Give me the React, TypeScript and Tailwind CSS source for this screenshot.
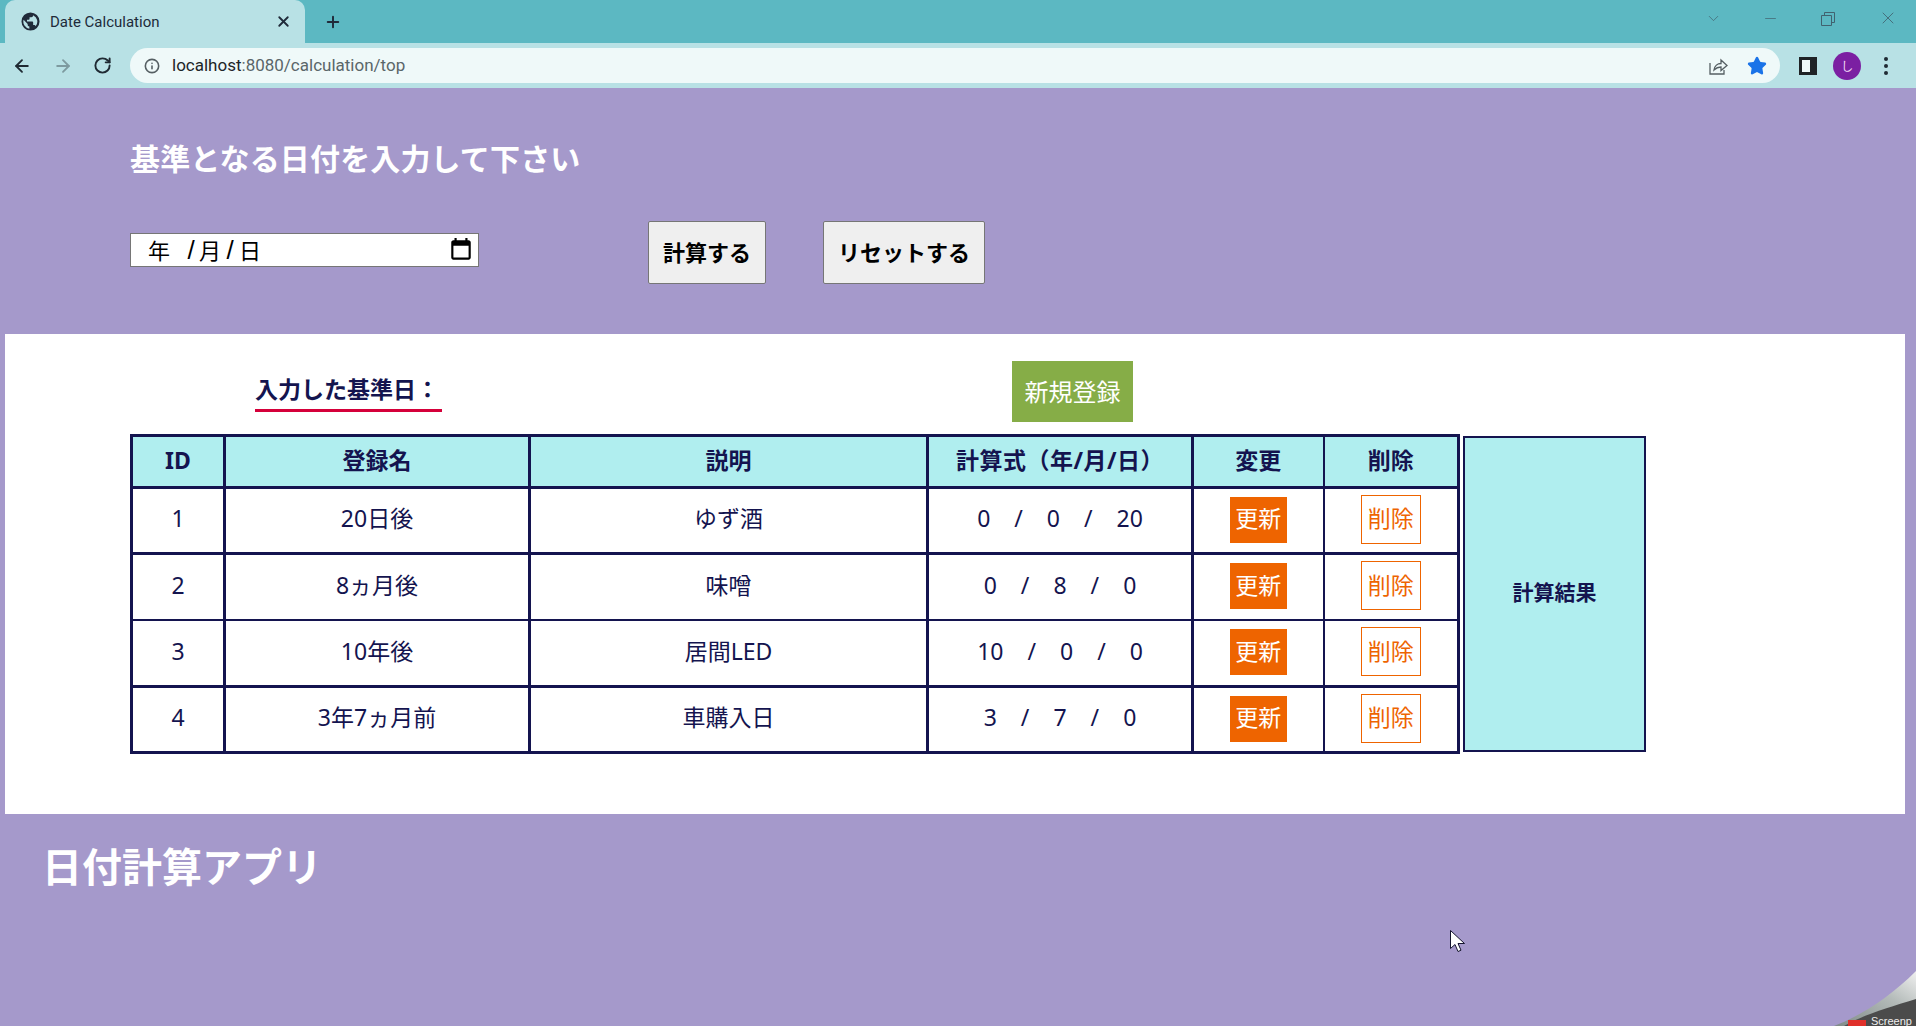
import { ArrowLeft, ArrowRight, ChevronDown, Info, Minus, Plus, RotateCw, Star, X } from 'lucide-react'

const cjk = "font-['Noto_Sans','Noto_Sans_CJK_JP',sans-serif]"

const rows = [
  { id: 1, name: '20日後', desc: 'ゆず酒', calc: ['0', '0', '20'], rowClass: 'h-[66px] border-b-[3px] border-[#14144f]' },
  { id: 2, name: '8ヵ月後', desc: '味噌', calc: ['0', '8', '0'], rowClass: 'h-[66px] border-b-2 border-[#14144f]' },
  { id: 3, name: '10年後', desc: '居間LED', calc: ['10', '0', '0'], rowClass: 'h-[67px] border-b-[3px] border-[#14144f]' },
  { id: 4, name: '3年7ヵ月前', desc: '車購入日', calc: ['3', '7', '0'], rowClass: 'h-[66px] border-b-2 border-[#14144f]' },
]

function BrowserChrome() {
  return (
    <div className="shrink-0">
      {/* Tab strip */}
      <div className="flex h-[43px] bg-[#5cb8c2] pl-[5px] text-[#202b3a]">
        <div className="flex w-[300px] items-center rounded-t-[10px] bg-[#b8e1e5] pl-[16px] pr-[13px]">
          <svg viewBox="0 0 20 20" className="h-[19px] w-[19px] shrink-0" fill="#202b3a">
            <path d="M10 .5a9.500 9.500 0 1 0 0 19 9.500 9.500 0 0 0 0-19ZM2.700 8.200l4.300 4.300v1c0 1 .8 1.800 1.800 1.800v2.300A7.600 7.600 0 0 1 2.700 8.200Zm12.700 6.900c-.2-.7-.9-1.300-1.700-1.300h-.9V11c0-.5-.4-.9-.9-.9H6.300V8.200h1.800c.5 0 .9-.4.900-.9V5.500h1.900c1 0 1.800-.8 1.800-1.800v-.4a7.600 7.600 0 0 1 2.700 11.800Z" />
          </svg>
          <span className="ml-[10px] pt-[1px] font-['Roboto',sans-serif] text-[15px]">Date Calculation</span>
          <X className="ml-auto h-[17px] w-[17px]" strokeWidth={2.6} />
        </div>
        <Plus className="ml-[19px] mt-[13px] h-[18px] w-[18px]" strokeWidth={2.6} />
        <div className="ml-auto flex items-start text-[#41626f]">
          <ChevronDown className="mr-[40px] mt-[10px] h-[17px] w-[17px]" strokeWidth={1} />
          <Minus className="mr-[42px] mt-[10px] h-[17px] w-[17px]" strokeWidth={1} />
          <svg viewBox="0 0 14 14" className="mr-[43px] mt-[12px] h-[14px] w-[14px]" fill="none" stroke="currentColor">
            <path d="M.5 3.500h10v10H.5zM3.500 3.500v-3h10v10h-3" />
          </svg>
          <X className="mr-[18px] mt-[8px] h-[20px] w-[20px]" strokeWidth={1} />
        </div>
      </div>
      {/* Toolbar */}
      <div className="flex h-[45px] items-center bg-[#b8e1e5] text-[#1f2a33]">
        <ArrowLeft className="ml-[12px] h-[20px] w-[20px]" strokeWidth={2.2} />
        <ArrowRight className="ml-[21px] h-[20px] w-[20px] text-[#7d9a9f]" strokeWidth={2.2} />
        <RotateCw className="ml-[20px] h-[19px] w-[19px]" strokeWidth={2.4} />
        <div className="ml-[18px] flex h-[35px] w-[1650px] items-center rounded-full bg-[#eff9f9] pl-[14px] pr-[11px]">
          <Info className="h-[16px] w-[16px] text-[#555f63]" strokeWidth={2.4} />
          <span className="ml-[12px] pt-[1px] font-['Roboto',sans-serif] text-[17px] text-[#5a6669]">
            <span className="text-[#1d2528]">localhost</span>:8080/calculation/top
          </span>
          <svg viewBox="0 0 20 20" className="ml-auto h-[20px] w-[20px]" fill="none" stroke="#555f63" strokeWidth="1.300">
            <path d="M2 7v11h14v-4M6 14c.5-4 3.500-6.500 7-6.500V4l6 5.500-6 5V11c-3 0-5 1-7 3Z" />
          </svg>
          <Star className="ml-[19px] mr-[2px] h-[20px] w-[20px] text-[#1a73e8]" fill="currentColor" />
        </div>
        <div className="ml-[19px] flex h-[18px] w-[18px] border-[3px] border-[#1f2326] bg-[#1f2326]">
          <div className="h-full w-[8px] bg-[#eff9f9]" />
        </div>
        <div className="ml-[16px] flex h-[28px] w-[28px] items-center justify-center rounded-full bg-[#7b1fa2]">
          <span className="font-['Roboto',sans-serif] text-[13px] text-[#f3d9f5]">し</span>
        </div>
        <div className="ml-[23px] flex flex-col gap-[3px]">
          <div className="h-[4px] w-[4px] rounded-full bg-[#1f2a33]" />
          <div className="h-[4px] w-[4px] rounded-full bg-[#1f2a33]" />
          <div className="h-[4px] w-[4px] rounded-full bg-[#1f2a33]" />
        </div>
      </div>
    </div>
  )
}

function DateField() {
  return (
    <div className="mb-[5px] flex h-[34px] w-[349px] items-center border border-[#767676] bg-white pl-[17px] pr-[4px] text-[22px] leading-none text-black">
      <span>年</span>
      <span className="ml-[16px] w-[10px] text-center font-['Liberation_Sans',sans-serif] text-[26px] font-light">/</span>
      <span className="ml-[3px]">月</span>
      <span className="ml-[4px] w-[10px] text-center font-['Liberation_Sans',sans-serif] text-[26px] font-light">/</span>
      <span className="ml-[4px]">日</span>
      <svg viewBox="0 0 24 24" className="ml-auto h-[26px] w-[26px]" fill="black">
        <path d="M19 3h-1V1h-2v2H8V1H6v2H5c-1.100 0-2 .9-2 2v14c0 1.100.9 2 2 2h14c1.100 0 2-.9 2-2V5c0-1.100-.9-2-2-2Zm0 16H5V8h14v11Z" />
      </svg>
    </div>
  )
}

function RegisterTable() {
  return (
    <table className="w-[1327px] shrink-0 table-fixed border-collapse border-[3px] border-[#14144f] text-[23px] text-[#14144f]">
      <colgroup>
        <col className="w-[93px]" />
        <col className="w-[305px]" />
        <col className="w-[398px]" />
        <col className="w-[265px]" />
        <col className="w-[131px]" />
        <col className="w-[135px]" />
      </colgroup>
      <thead>
        <tr className="h-[52px] bg-[#b0eeef] font-bold">
          <th className="border-[3px] border-[#14144f] pb-[3px]">ID</th>
          <th className="border-[3px] border-[#14144f] pb-[3px]">登録名</th>
          <th className="border-[3px] border-[#14144f] pb-[3px]">説明</th>
          <th className="border-[3px] border-[#14144f] pb-[3px] tracking-[0.5px]">計算式（年/月/日）</th>
          <th className="border-2 border-y-[3px] border-[#14144f] pb-[3px]">変更</th>
          <th className="border-2 border-y-[3px] border-[#14144f] pb-[3px]">削除</th>
        </tr>
      </thead>
      <tbody>
        {rows.map((row) => (
          <tr key={row.id} className={row.rowClass}>
            <td className="border-x-[3px] border-[#14144f] pb-[4px] text-center">{row.id}</td>
            <td className="border-x-[3px] border-[#14144f] pb-[4px] text-center">{row.name}</td>
            <td className="border-x-[3px] border-[#14144f] pb-[4px] text-center">{row.desc}</td>
            <td className="border-x-[3px] border-[#14144f] pb-[4px]">
              <div className="flex justify-center gap-[24px]">
                <span>{row.calc[0]}</span>
                <span>/</span>
                <span>{row.calc[1]}</span>
                <span>/</span>
                <span>{row.calc[2]}</span>
              </div>
            </td>
            <td className="border-x-2 border-[#14144f]">
              <button className="mx-auto mb-[2px] flex h-[46px] w-[57px] items-center justify-center bg-[#ee6400] pb-[2px] text-white">更新</button>
            </td>
            <td className="border-x-2 border-[#14144f]">
              <button className="mx-auto mb-[2px] flex h-[49px] w-[60px] items-center justify-center border border-[#ee6400] bg-white pb-[2px] text-[#ee6400]">削除</button>
            </td>
          </tr>
        ))}
      </tbody>
    </table>
  )
}

export default function App() {
  return (
    <div className={`relative flex h-[1026px] flex-col overflow-hidden bg-[#a599cb] ${cjk}`}>
      <BrowserChrome />

      {/* Base date form */}
      <section className="h-[246px] shrink-0 pl-[130px] pt-[51px]">
        <h2 className="text-[30px] font-bold leading-[40px] tracking-[0.15px] text-white">基準となる日付を入力して下さい</h2>
        <div className="mt-[42px] flex items-center">
          <DateField />
          <button className="ml-[169px] h-[63px] w-[118px] rounded-[2px] border border-[#767676] bg-[#efefef] text-[22px] font-bold text-black">計算する</button>
          <button className="ml-[57px] h-[63px] w-[162px] rounded-[2px] border border-[#767676] bg-[#efefef] text-[22px] font-bold text-black">リセットする</button>
        </div>
      </section>

      {/* Registered list */}
      <section className="ml-[5px] mr-[11px] h-[480px] shrink-0 bg-white pl-[125px] pt-[27px]">
        <div className="flex items-center">
          <div className="ml-[125px] w-[187px] border-b-[3px] border-[#d5003a] pb-[3px] pt-[1px] text-[23px] font-bold leading-[33px] text-[#14144f]">入力した基準日：</div>
          <button className="ml-[570px] h-[61px] w-[121px] bg-[#86ad47] text-[24px] text-white">新規登録</button>
        </div>
        <div className="mt-[12px] flex items-center gap-[3px]">
          <RegisterTable />
          <div className="flex h-[316px] w-[183px] items-center justify-center border-2 border-[#14144f] bg-[#b0eeef] pb-[2px] text-[21px] font-bold text-[#14144f]">計算結果</div>
        </div>
      </section>

      <h1 className="pl-[42px] pt-[26px] text-[40px] font-bold leading-[54px] text-white">日付計算アプリ</h1>

      {/* Mouse cursor */}
      <svg viewBox="0 0 16 24" className="absolute left-[1450px] top-[930px] h-[24px] w-[16px]" fill="white" stroke="#14142e" strokeWidth="1">
        <path d="M.5.5v18l4.500-4 3 7 3-1.300-3-6.700h6.500Z" />
      </svg>

      {/* Page peel in the corner */}
      <svg viewBox="0 0 100 60" className="absolute bottom-0 right-0 h-[60px] w-[100px]">
        <defs>
          <linearGradient id="peel" x1="0" y1="1" x2="1" y2="0">
            <stop offset="0" stopColor="#7f8a88" />
            <stop offset="0.6" stopColor="#b4bbb9" />
            <stop offset="1" stopColor="#f0f0f0" />
          </linearGradient>
        </defs>
        <path d="M18 60C45 50 75 30 100 5V60Z" fill="url(#peel)" />
        <path d="M28 60C45 50 70 42 100 33V60Z" fill="#4b4b4b" />
        <rect x="32" y="54" width="18" height="6" fill="#e0302a" />
        <text x="55" y="59" fill="#eeeeee" fontSize="11" fontFamily="Liberation Sans, sans-serif">Screenp</text>
      </svg>
    </div>
  )
}
